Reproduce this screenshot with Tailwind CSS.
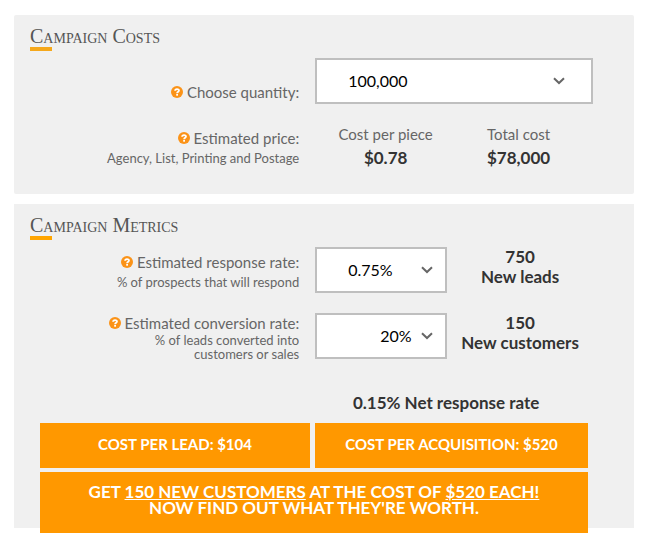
<!DOCTYPE html>
<html lang="en">
<head>
    <meta charset="UTF-8">
    <meta name="viewport" content="width=device-width, initial-scale=1.0">
    <title>Campaign Calculator</title>
    <script src="https://cdn.jsdelivr.net/npm/@tailwindcss/browser@4"></script>
</head>
<body class="bg-white font-[Lato,sans-serif] text-base text-[#666]">
    <!-- icons -->
    <svg class="hidden">
        <symbol id="help" viewBox="0 0 12 12">
            <circle cx="6" cy="6" r="6" fill="#fb9318"/>
            <path d="M4.1 4.8C4.1 2.5 8 2.5 8 4.6C8 5.8 6.1 5.8 6.1 7.2" fill="none" stroke="#fff" stroke-width="1.8"/>
            <rect x="5.2" y="8" width="1.8" height="1.7" fill="#fff"/>
        </symbol>
        <symbol id="chevron" viewBox="0 0 12 8">
            <path d="M1 1.2L6 6L11 1.2" fill="none" stroke="#666" stroke-width="2"/>
        </symbol>
    </svg>

    <main class="pt-[15px] pl-3.5 pr-3 pb-3.5">
        <!-- costs -->
        <section class="bg-[#f0f0f0] pt-[11px] pb-6 rounded-xs">
            <h2 class="pl-4 text-xl leading-5 font-[Liberation_Serif,serif] [font-variant:small-caps] text-[#555]">Campaign Costs</h2>
            <div class="ml-4 mt-px w-[22px] h-1 bg-[#f5a81c]"></div>

            <div class="flex items-end mt-[7px]">
                <label for="quantity" class="w-[46%] flex items-center justify-end gap-1 text-[15px] leading-6"><svg class="size-3"><use href="#help"/></svg>Choose quantity:</label>
                <div class="flex-1 pl-4 pr-[41px]">
                    <div class="relative">
                        <select id="quantity" class="block appearance-none w-full h-[46px] border-2 border-[#bfbfbf] bg-white pl-[31px] text-black">
                            <option>100,000</option>
                        </select>
                        <svg class="absolute right-7 top-[19px] w-3 h-2 pointer-events-none"><use href="#chevron"/></svg>
                    </div>
                </div>
            </div>

            <div class="flex items-end mt-[18px]">
                <div class="w-[46%] pb-1 text-right">
                    <div class="flex items-center justify-end gap-1 text-[15px] leading-6"><svg class="size-3"><use href="#help"/></svg>Estimated price:</div>
                    <div class="text-[13px] leading-4">Agency, List, Printing and Postage</div>
                </div>
                <div class="flex-1 pl-4 pr-[41px]">
                    <div class="grid grid-cols-2 pl-1 pr-2 text-center text-[15px] leading-6">
                        <div>Cost per piece<div class="text-[17px] leading-6 font-bold text-[#333]">$0.78</div></div>
                        <div>Total cost<div class="text-[17px] leading-6 font-bold text-[#333]">$78,000</div></div>
                    </div>
                </div>
            </div>
        </section>

        <!-- metrics -->
        <section class="flow-root bg-[#f0f0f0] mt-2.5 pt-[11px]">
            <h2 class="pl-4 text-xl leading-5 font-[Liberation_Serif,serif] [font-variant:small-caps] text-[#555]">Campaign Metrics</h2>
            <div class="ml-4 mt-px w-[22px] h-1 bg-[#ffa500]"></div>

            <div class="flex mt-[7px]">
                <label for="response" class="w-[46%] self-center text-right">
                    <span class="flex items-center justify-end gap-1 text-[15px] leading-6"><svg class="size-3"><use href="#help"/></svg>Estimated response rate:</span>
                    <span class="block text-[13px] leading-4">% of prospects that will respond</span>
                </label>
                <div class="flex-1 flex pl-4 pr-[41px]">
                    <div class="relative w-[132px]">
                        <select id="response" class="block appearance-none w-full h-[46px] border-2 border-[#bfbfbf] bg-white pl-[31px] text-black">
                            <option>0.75%</option>
                        </select>
                        <svg class="absolute right-3.5 top-[19px] w-3 h-2 pointer-events-none"><use href="#chevron"/></svg>
                    </div>
                    <div class="flex-1 text-center text-[17px] leading-5 font-bold text-[#333]">750<br>New leads</div>
                </div>
            </div>

            <div class="flex mt-5">
                <label for="conversion" class="w-[46%] text-right">
                    <span class="flex items-center justify-end gap-1 text-[15px] leading-5"><svg class="size-3"><use href="#help"/></svg>Estimated conversion rate:</span>
                    <span class="block text-[13px] leading-3.5">% of leads converted into<br>customers or sales</span>
                </label>
                <div class="flex-1 flex pl-4 pr-[41px]">
                    <div class="relative w-[132px]">
                        <select id="conversion" class="block appearance-none w-full h-[46px] border-2 border-[#bfbfbf] bg-white pl-[63px] text-black">
                            <option>20%</option>
                        </select>
                        <svg class="absolute right-3.5 top-[19px] w-3 h-2 pointer-events-none"><use href="#chevron"/></svg>
                    </div>
                    <div class="flex-1 text-center text-[17px] leading-5 font-bold text-[#333]">150<br>New customers</div>
                </div>
            </div>

            <div class="flex mt-8">
                <div class="ml-[46%] flex-1 pl-4 pr-[57px] text-center text-[17px] leading-5 font-bold text-[#333]">0.15% Net response rate</div>
            </div>

            <!-- results, the last bar hangs over the bottom of the panel -->
            <div class="mt-[10px] ml-[26px] mr-[46px] -mb-[5px] text-white font-bold">
                <div class="grid grid-cols-[270fr_273fr] gap-[5px]">
                    <button type="button" class="h-[45px] pb-0.5 bg-[#ff9800] text-[15px]">COST PER LEAD: $104</button>
                    <button type="button" class="h-[45px] pb-0.5 bg-[#ff9800] text-[15px]">COST PER ACQUISITION: $520</button>
                </div>
                <button type="button" class="block w-full mt-1 pt-3 pb-[17px] bg-[#ff9800] text-[17px] leading-4">GET <u>150 NEW CUSTOMERS</u> AT THE COST OF <u>$520 EACH!</u><br>NOW FIND OUT WHAT THEY'RE WORTH.</button>
            </div>
        </section>
    </main>
</body>
</html>
